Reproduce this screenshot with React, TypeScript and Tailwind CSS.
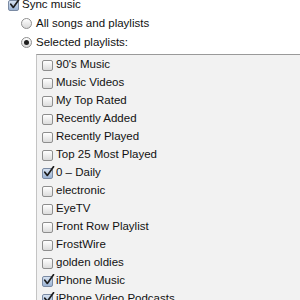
import React from "react";

const playlists: { name: string; checked: boolean }[] = [
  { name: "90's Music", checked: false },
  { name: "Music Videos", checked: false },
  { name: "My Top Rated", checked: false },
  { name: "Recently Added", checked: false },
  { name: "Recently Played", checked: false },
  { name: "Top 25 Most Played", checked: false },
  { name: "0 – Daily", checked: true },
  { name: "electronic", checked: false },
  { name: "EyeTV", checked: false },
  { name: "Front Row Playlist", checked: false },
  { name: "FrostWire", checked: false },
  { name: "golden oldies", checked: false },
  { name: "iPhone Music", checked: true },
  { name: "iPhone Video Podcasts", checked: true },
];

function Check({ checked }: { checked: boolean }) {
  return (
    <span
      className={
        checked
          ? "relative w-[11px] h-[11px] shrink-0 rounded-[2px] border border-[#7a8aa3] bg-gradient-to-b from-[#d6e2f1] to-[#9bb3d4]"
          : "relative w-[11px] h-[11px] shrink-0 rounded-[2px] border border-[#8e8e8e] bg-gradient-to-b from-[#ffffff] to-[#dcdcdc]"
      }
    >
      {checked && (
        <svg
          className="absolute -top-[3px] left-[0px]"
          width="12"
          height="12"
          viewBox="0 0 12 12"
        >
          <path
            d="M1.8 6.2 L4.3 9.4 L10.5 0.8"
            fill="none"
            stroke="#1c1c1c"
            strokeWidth="1.7"
            strokeLinecap="round"
            strokeLinejoin="round"
          />
        </svg>
      )}
    </span>
  );
}

function Radio({ on }: { on: boolean }) {
  return (
    <span className="flex items-center justify-center w-[11px] h-[11px] shrink-0 rounded-full border border-[#8e8e8e] bg-gradient-to-b from-[#ffffff] to-[#d8d8d8]">
      {on && <span className="w-[5px] h-[5px] rounded-full bg-[#1f1f1f]" />}
    </span>
  );
}

export default function App() {
  return (
    <div className="w-[300px] h-[300px] overflow-hidden bg-white font-['Liberation_Sans',sans-serif] text-[11.5px] text-[#111]">
      <div className="-mt-[4px] pl-[8px] flex items-center gap-[3px] h-[18px]">
        <Check checked={true} />
        <span>Sync music</span>
      </div>
      <div className="pl-[21px] flex items-center gap-[4px] h-[19px]">
        <Radio on={false} />
        <span>All songs and playlists</span>
      </div>
      <div className="pl-[21px] flex items-center gap-[4px] h-[19px]">
        <Radio on={true} />
        <span>Selected playlists:</span>
      </div>
      <div className="ml-[36px] mt-[2px] border-t border-l border-t-[#9a9a9a] border-l-[#c4c4c4] bg-[#f2f2f2] pt-[1px]">
        {playlists.map((p) => (
          <div key={p.name} className="flex items-center gap-[3px] pl-[5px] h-[18px]">
            <Check checked={p.checked} />
            <span className="whitespace-nowrap">{p.name}</span>
          </div>
        ))}
      </div>
    </div>
  );
}
